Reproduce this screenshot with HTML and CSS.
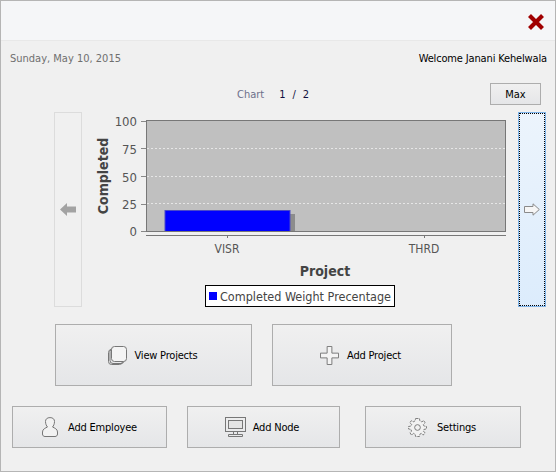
FILE: index.html
```html
<!DOCTYPE html>
<html>
<head>
	<title>Dashboard</title>
	<link rel="stylesheet" href="styles.css">
</head>
<body>
	<div class="frame">
		<header class="titlebar">
			<svg class="close" width="18" height="18" viewBox="0 0 18 18"><path d="M2.5 2.5L15.5 15.5M15.5 2.5L2.5 15.5" stroke="#a00000" stroke-width="4.2"/></svg>
		</header>
		<div class="info">
			<span class="date">Sunday, May 10, 2015</span>
			<span class="welcome">Welcome Janani Kehelwala</span>
		</div>
		<div class="pager">
			<div class="pager-text"><span class="pager-label">Chart</span><span>1</span><span>/</span><span>2</span></div>
			<button class="btn max-btn">Max</button>
		</div>
		<div class="chart-row">
			<button class="nav-btn">
				<svg width="16" height="13" viewBox="0 0 16 13"><path d="M0 6.5L7 0V3.5H16V9.5H7V13Z" fill="#a3a3a3"/></svg>
			</button>
			<svg class="chart" width="427" height="195" viewBox="0 0 427 195">
				<rect x="55.5" y="8.5" width="359" height="111" fill="#c0c0c0"/>
				<g stroke="#e6e6e6" stroke-dasharray="2 2">
					<path d="M56 36.5H414M56 64.5H414M56 91.5H414"/>
				</g>
				<rect x="74" y="102" width="130" height="17" fill="#8c8c8c"/>
				<rect x="74" y="98.5" width="125" height="21" fill="#0000ff" stroke="#4a4ac8"/>
				<rect x="55.5" y="8.5" width="359" height="111" fill="none" stroke="#777"/>
				<path d="M50 9.5H55M50 36.5H55M50 64.5H55M50 92.5H55M50 119.5H55" stroke="#888"/>
				<path d="M55 123.5H415M136.5 124V126M333.5 124V126" stroke="#777"/>
				<g class="tick" text-anchor="end">
					<text x="46" y="14">100</text>
					<text x="46" y="42">75</text>
					<text x="46" y="70">50</text>
					<text x="46" y="97">25</text>
					<text x="46" y="124">0</text>
				</g>
				<g class="cat" text-anchor="middle">
					<text x="136" y="141">VISR</text>
					<text x="333" y="141">THRD</text>
				</g>
				<text class="axis" transform="translate(17 64) rotate(-90)" text-anchor="middle">Completed</text>
				<text class="axis" x="234" y="164" text-anchor="middle">Project</text>
				<rect x="114.5" y="173.5" width="189" height="21" fill="#fff" stroke="#000"/>
				<rect x="118" y="180" width="8" height="8" fill="#0000ff"/>
				<text class="legend" x="129" y="189">Completed Weight Precentage</text>
			</svg>
			<button class="nav-btn nav-focus">
				<svg width="16" height="13" viewBox="0 0 16 13"><path d="M.5 3.5H9V.8L15.3 6.5L9 12.2V9.5H.5Z" fill="#f6f6f6" stroke="#8a8a8a"/></svg>
			</button>
		</div>
		<div class="actions-top">
			<button class="btn action view-btn">
				<svg width="19" height="19" viewBox="0 0 19 19"><g stroke="#777" fill="none"><rect x=".5" y="3.5" width="14" height="15" rx="3"/><rect x="2" y="2.5" width="14" height="15" rx="3"/></g><rect x="3.5" y=".5" width="15" height="15" rx="3" fill="#f4f4f4" stroke="#777"/></svg>
				View Projects
			</button>
			<button class="btn action add-project">
				<svg width="19" height="19" viewBox="0 0 20 20"><path d="M7.5 .5H12.5V7.5H19.5V12.5H12.5V19.5H7.5V12.5H.5V7.5H7.5Z" fill="#f4f4f4" stroke="#777"/></svg>
				Add Project
			</button>
		</div>
		<div class="actions-bottom">
			<button class="btn action employee-btn">
				<svg width="16" height="20" viewBox="0 0 16 20"><path d="M8 .6C11 .6 12.5 2.2 12.5 4.5C12.5 7 11.5 9 10.5 10C12.5 11 15.5 12 15.5 15V17C15.5 18.5 14.5 19.5 13 19.5H3C1.5 19.5 .5 18.5 .5 17V15C.5 12 3.5 11 5.5 10C4.5 9 3.5 7 3.5 4.5C3.5 2.2 5 .6 8 .6Z" fill="#f2f2f2" stroke="#777"/></svg>
				Add Employee
			</button>
			<button class="btn action node-btn">
				<svg width="21" height="20" viewBox="0 0 21 20"><rect x=".5" y=".5" width="20" height="14" fill="none" stroke="#777"/><rect x="3.5" y="3.5" width="14" height="8" fill="#e4e4e4" stroke="#777"/><path d="M8.5 15V17M12.5 15V17" stroke="#777"/><path d="M3.5 17.5H17.5V19.5H3.5Z" fill="none" stroke="#777"/></svg>
				Add Node
			</button>
			<button class="btn action settings-btn">
				<svg width="19" height="19" viewBox="0 0 20 20"><path d="M8 .5H12L12.5 3L14.5 4L16.8 2.8L18 5L16.2 6.8L16.8 8.5L19.5 9V11.5L16.8 12L16.2 14L18 15.5L16 18L14 16.2L12.5 17L12 19.5H8L7.5 17L5.8 16.2L3.8 18L2 15.5L3.7 14L3.2 12L.5 11.5V9L3.2 8.5L3.8 6.8L2 5L3.5 2.8L5.5 4L7.5 3Z" fill="#f2f2f2" stroke="#777" stroke-dasharray="3 1"/><circle cx="10" cy="10" r="3" fill="none" stroke="#777"/></svg>
				Settings
			</button>
		</div>
	</div>
</body>
</html>
```
FILE: styles.css
```css
body{
	margin: 0;
	font-family: "DejaVu Sans", sans-serif;
	font-stretch: condensed;
	font-size: 11px;
	color: #000;
}
.frame{
	box-sizing: border-box;
	width: 556px;
	height: 472px;
	border: 1px solid #b5b5b5;
	background-color: #f0f0f0;
}
.titlebar{
	box-sizing: border-box;
	height: 40px;
	background-color: #f5f6f8;
	border-bottom: 1px solid #e8e8e8;
	display: flex;
	justify-content: flex-end;
	padding: 12px 10px 0 0;
}
.info{
	display: flex;
	justify-content: space-between;
	height: 42px;
	padding: 11px 8px 0 9px;
	box-sizing: border-box;
	line-height: 14px;
}
.date{
	color: #6f6f6f;
}
.welcome{
	letter-spacing: -0.15px;
}
.pager{
	display: flex;
	align-items: center;
	height: 22px;
	padding-right: 14px;
}
.pager-text{
	display: flex;
	gap: 7px;
	margin-left: 236px;
	color: #101040;
}
.pager-label{
	color: #6c6f8a;
	margin-right: 8px;
}
.max-btn{
	width: 51px;
	height: 22px;
	margin-left: auto;
}
.btn{
	font: inherit;
	font-stretch: condensed;
	color: #000;
	border: 1px solid #adadad;
	background: linear-gradient(#f0f0f0, #e5e6e8);
	padding: 0;
}
.chart-row{
	display: flex;
	margin-top: 7px;
	padding-left: 53px;
	height: 195px;
}
.chart{
	display: block;
	margin-left: 9px;
}
.chart text{
	font-family: "DejaVu Sans", sans-serif;
	font-stretch: condensed;
}
.tick{
	font-size: 13px;
	fill: #555;
}
.cat{
	font-size: 12px;
	fill: #555;
}
.axis{
	font-size: 14px;
	font-weight: bold;
	fill: #444;
}
.legend{
	font-size: 12.5px;
	fill: #444;
}
.nav-btn{
	box-sizing: border-box;
	width: 28px;
	height: 195px;
	padding: 0;
	background-color: #f0f0f0;
	border: 1px solid #dcdcdc;
	display: flex;
	align-items: center;
	justify-content: center;
}
.nav-focus{
	border-color: #7eb4ea;
	background: linear-gradient(#ecf4fc, #dcecfc);
	outline: 1px dotted #000;
	outline-offset: -2px;
}
.actions-top{
	display: flex;
	gap: 20px;
	margin-top: 17px;
	padding-left: 54px;
}
.actions-bottom{
	display: flex;
	margin-top: 20px;
	padding-left: 11px;
}
.action{
	box-sizing: border-box;
	display: flex;
	align-items: center;
	justify-content: center;
	gap: 8px;
	letter-spacing: -0.2px;
}
.view-btn{
	width: 197px;
	height: 62px;
	padding-right: 2px;
}
.add-project{
	width: 180px;
	height: 62px;
	padding-right: 3px;
}
.employee-btn, .node-btn, .settings-btn{
	height: 42px;
}
.employee-btn{
	width: 155px;
	gap: 10px;
}
.node-btn{
	width: 153px;
	margin-left: 20px;
	gap: 7px;
	padding-right: 3px;
}
.settings-btn{
	width: 156px;
	margin-left: 25px;
	gap: 10px;
	padding-right: 2px;
}
```
